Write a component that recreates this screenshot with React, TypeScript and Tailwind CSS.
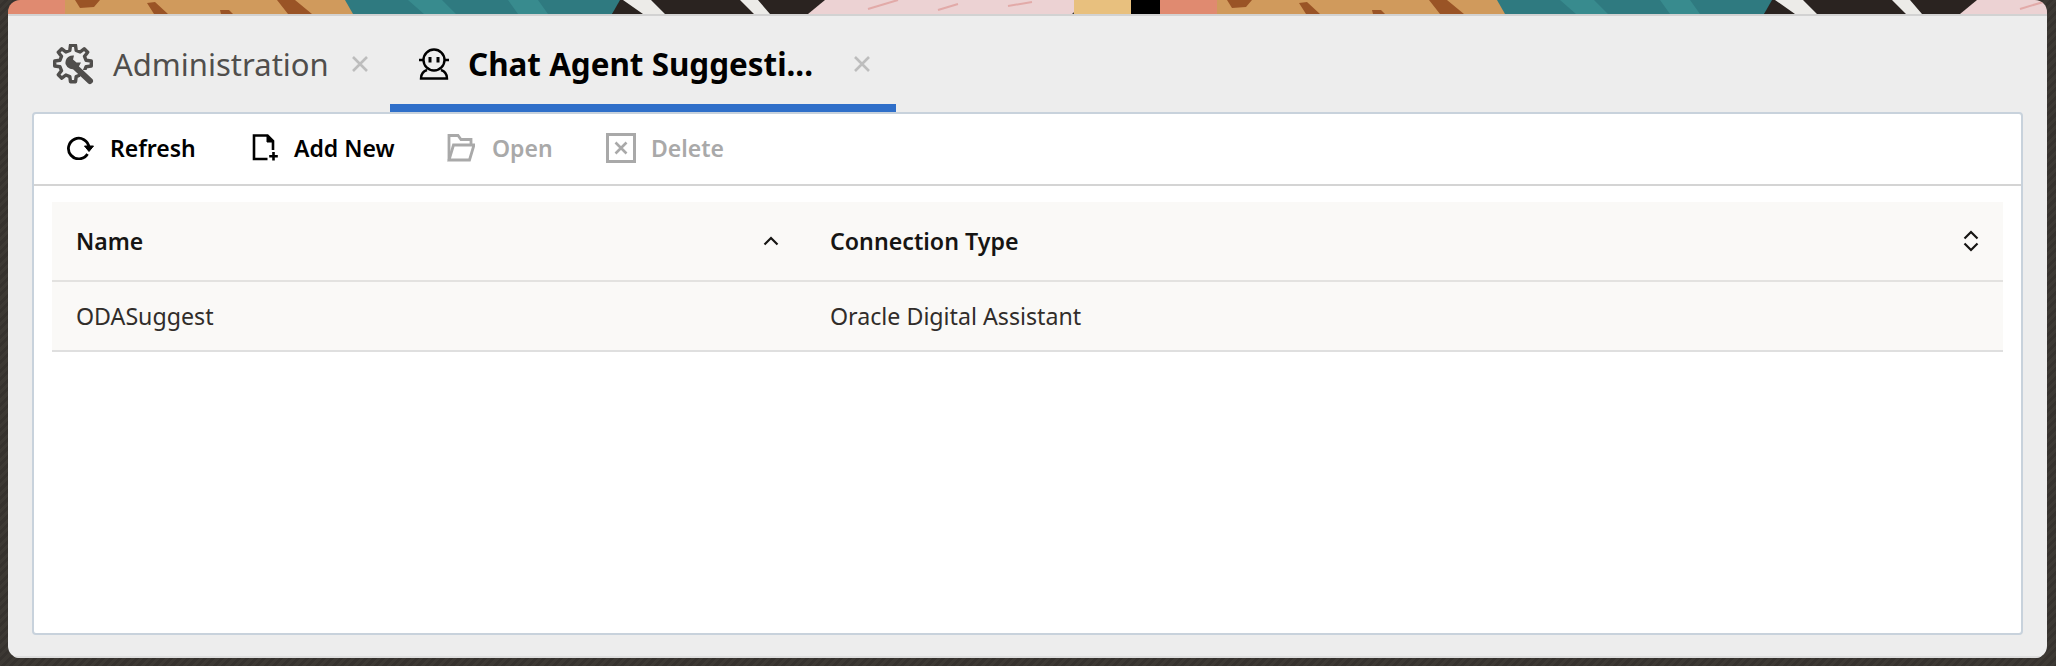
const font = "font-['Noto_Sans',sans-serif]";

// gear outline with 8 teeth, drawn as one closed path
function gearPath(cx: number, cy: number, outer: number, inner: number, teeth: number) {
  const pts: string[] = [];
  const step = (Math.PI * 2) / teeth;
  for (let i = 0; i < teeth; i++) {
    const a = i * step - Math.PI / 2;
    const list: [number, number][] = [
      [inner, a - step * 0.3],
      [outer, a - step * 0.17],
      [outer, a + step * 0.17],
      [inner, a + step * 0.3],
    ];
    for (const [r, t] of list) {
      pts.push(`${(cx + r * Math.cos(t)).toFixed(1)} ${(cy + r * Math.sin(t)).toFixed(1)}`);
    }
  }
  return `M${pts.join('L')}Z`;
}

function AdminIcon() {
  return (
    <svg width="41" height="41" viewBox="0 0 41 41" className="shrink-0">
      <path d={gearPath(20, 19.5, 18.5, 13.5, 8)} fill="none" stroke="#504e4c" strokeWidth="3.4" strokeLinejoin="round" />
      <path d="M24 40 L41 40 L41 26 L30 26Z" fill="#ededed" />
      <path d="M20 21 L37 37" stroke="#504e4c" strokeWidth="6" strokeLinecap="round" />
      <path d="M21 11.500 A7.500 7.500 0 0 0 12.500 20 A7.500 7.500 0 0 0 23.500 24 L25 24 L28 18.500 L23.500 18.500 L20 15.500Z" fill="#504e4c" />
    </svg>
  );
}

function AgentIcon() {
  return (
    <svg width="32" height="32" viewBox="0 0 32 32" fill="none" stroke="#000" strokeWidth="2.4" className="shrink-0">
      <circle cx="16" cy="12" r="10.5" />
      <path d="M1 12h4M27 12h4" />
      <path d="M12 9v5.5M20 9v5.5" strokeWidth="3" />
      <path d="M9 22c-3 1-6 3-6 8.5h26c0-5.500-3-7.500-6-8.500" />
    </svg>
  );
}

function CloseIcon() {
  return (
    <svg width="16" height="16" viewBox="0 0 16 16" stroke="#bdbdbd" strokeWidth="2.6" className="shrink-0">
      <path d="M1 1l14 14M15 1L1 15" />
    </svg>
  );
}

function RefreshIcon() {
  return (
    <svg width="28" height="24" viewBox="0 0 28 24" fill="none" className="shrink-0">
      <path d="M23 11.500A10.300 10.300 0 1 0 21.500 18" stroke="#000" strokeWidth="2.800" />
      <path d="M18.500 10h9l-4.500 5.500z" fill="#000" stroke="#000" strokeWidth="1" />
    </svg>
  );
}

function AddFileIcon() {
  return (
    <svg width="27" height="28" viewBox="0 0 27 28" fill="none" stroke="#000" className="shrink-0">
      <path d="M15.500 25H2V1.500h13.500L21 7v9" strokeWidth="2.600" />
      <path d="M15 2v6h6" fill="#000" strokeWidth="1" />
      <path d="M21.500 18v8.500M17.200 22.300h8.600" strokeWidth="2.600" />
    </svg>
  );
}

function OpenIcon() {
  return (
    <svg width="28" height="28" viewBox="0 0 28 28" fill="none" stroke="#a9a9a9" strokeWidth="2.800" className="shrink-0">
      <path d="M2 26V1.500h9l3 4h10V11" />
      <path d="M2 26h20.500L27 11H6.500L2 26z" />
    </svg>
  );
}

function DeleteIcon() {
  return (
    <svg width="30" height="30" viewBox="0 0 30 30" fill="none" stroke="#a9a9a9" className="shrink-0">
      <rect x="1.500" y="1.500" width="27" height="27" strokeWidth="3" />
      <path d="M9.500 9.500l11 11M20.500 9.500l-11 11" strokeWidth="2.600" />
    </svg>
  );
}

function SortUp() {
  return (
    <svg width="16" height="10" viewBox="0 0 16 10" fill="none" stroke="#161513" strokeWidth="2.200">
      <path d="M1.500 8.500L8 2l6.500 6.500" />
    </svg>
  );
}

function SortBoth() {
  return (
    <svg width="16" height="22" viewBox="0 0 16 22" fill="none" stroke="#161513" strokeWidth="2.200">
      <path d="M1.500 8.500L8 2l6.500 6.500M1.500 13.500L8 20l6.500-6.500" />
    </svg>
  );
}

// the wallpaper peeking out above the panel
function WallpaperStrip() {
  const tile = (
    <>
      <rect x="0" width="58" height="14" fill="#e08a70" />
      <rect x="57" width="290" height="14" fill="#d09a5c" />
      <path d="M67 0h25l-6 7-14 1zM139 3l8-1 13 12h-14zM212 10l9-0 4 4h-12zM269 0h18l17 14h-24z" fill="#9a5426" />
      <path d="M337 0h280l-13 14H345z" fill="#2f7a80" />
      <path d="M400 0h34l14 14h-32zM500 0h30l10 14h-30z" fill="#388b8e" />
      <path d="M612 0h208l-17 14H604z" fill="#2a2320" />
      <path d="M615 0h28l14 14h-22zM732 0h18l12 14h-16z" fill="#ecebe8" />
      <path d="M800 14L817 0h262l-15 14z" fill="#ecd2d3" />
      <path d="M860 9l30-9M930 10l20-6M1000 6l24-4" stroke="#e2aaa8" strokeWidth="2" />
      <rect x="1066" width="58" height="14" fill="#e8c07e" />
      <rect x="1123" width="31" height="14" fill="#000" />
    </>
  );
  return (
    <svg width="2039" height="14" viewBox="0 0 2039 14" className="block shrink-0">
      <g>{tile}</g>
      <g transform="translate(1152 0)">{tile}</g>
    </svg>
  );
}

function ToolButton({ icon, label, off, className }: { icon: React.ReactNode; label: string; off?: boolean; className: string }) {
  return (
    <div className={`flex items-center ${className}`}>
      {icon}
      <span className={`text-[23px] leading-none font-semibold ${off ? 'text-[#a9a9a9]' : 'text-black'}`}>{label}</span>
    </div>
  );
}

export default function App() {
  return (
    <div className={`${font} w-[2056px] h-[666px] overflow-hidden pl-[8px] pr-[9px] pb-[8px] bg-[#3a3632] bg-[repeating-linear-gradient(135deg,#3d3934_0px,#3d3934_3px,#36322e_3px,#36322e_6px)]`}>
      <div className="flex flex-col h-full rounded-[12px] overflow-hidden">
        <WallpaperStrip />

        <div className="flex-1 flex flex-col bg-[#ededed] border-t-2 border-b-2 border-t-[#d2d2d2] border-b-[#dedede] px-[24px] pb-[21px]">
          {/* Tabs */}
          <div className="h-[96px] flex items-stretch -mx-[24px]">
            <div className="flex items-center pl-[45px] w-[382px]">
              <AdminIcon />
              <span className="ml-[19px] text-[31px] leading-none text-[#504e4c]">Administration</span>
              <span className="ml-[23px]"><CloseIcon /></span>
            </div>
            <div className="flex items-center w-[506px] pl-[28px] border-b-[8px] border-[#2f6fc9] pt-[8px]">
              <AgentIcon />
              <span className="ml-[18px] text-[31.4px] leading-none font-bold text-black">Chat Agent Suggesti...</span>
              <span className="ml-[41px]"><CloseIcon /></span>
            </div>
          </div>

          {/* Card */}
          <div className="flex-1 flex flex-col bg-white border-2 border-[#c8d2dc] rounded-[4px]">
            <div className="h-[72px] flex items-center pl-[32px] pb-[2px] border-b-2 border-[#d4d4d4]">
              <ToolButton icon={<RefreshIcon />} label="Refresh" className="gap-[16px] w-[186px]" />
              <ToolButton icon={<AddFileIcon />} label="Add New" className="gap-[15px] w-[195px]" />
              <ToolButton icon={<OpenIcon />} label="Open" off className="gap-[17px] w-[159px]" />
              <ToolButton icon={<DeleteIcon />} label="Delete" off className="gap-[15px]" />
            </div>

            {/* Table */}
            <div className="mx-[18px] mt-[16px] bg-[#faf9f7] text-[#161513]">
              <div className="h-[80px] grid grid-cols-[778px_1fr] items-center border-b-2 border-[#e3e2e0]">
                <div className="flex items-center justify-between pl-[24px] pr-[51px]">
                  <span className="text-[23px] leading-[24px] font-semibold">Name</span>
                  <SortUp />
                </div>
                <div className="flex items-center justify-between pr-[24px]">
                  <span className="text-[23.2px] leading-[24px] font-semibold">Connection Type</span>
                  <SortBoth />
                </div>
              </div>
              <div className="h-[70px] grid grid-cols-[778px_1fr] items-center border-b-2 border-[#dfdfdf] text-[23.2px] leading-[24px] text-[#312d2a]">
                <div className="pl-[24px]">ODASuggest</div>
                <div>Oracle Digital Assistant</div>
              </div>
            </div>
          </div>
        </div>
      </div>
    </div>
  );
}
